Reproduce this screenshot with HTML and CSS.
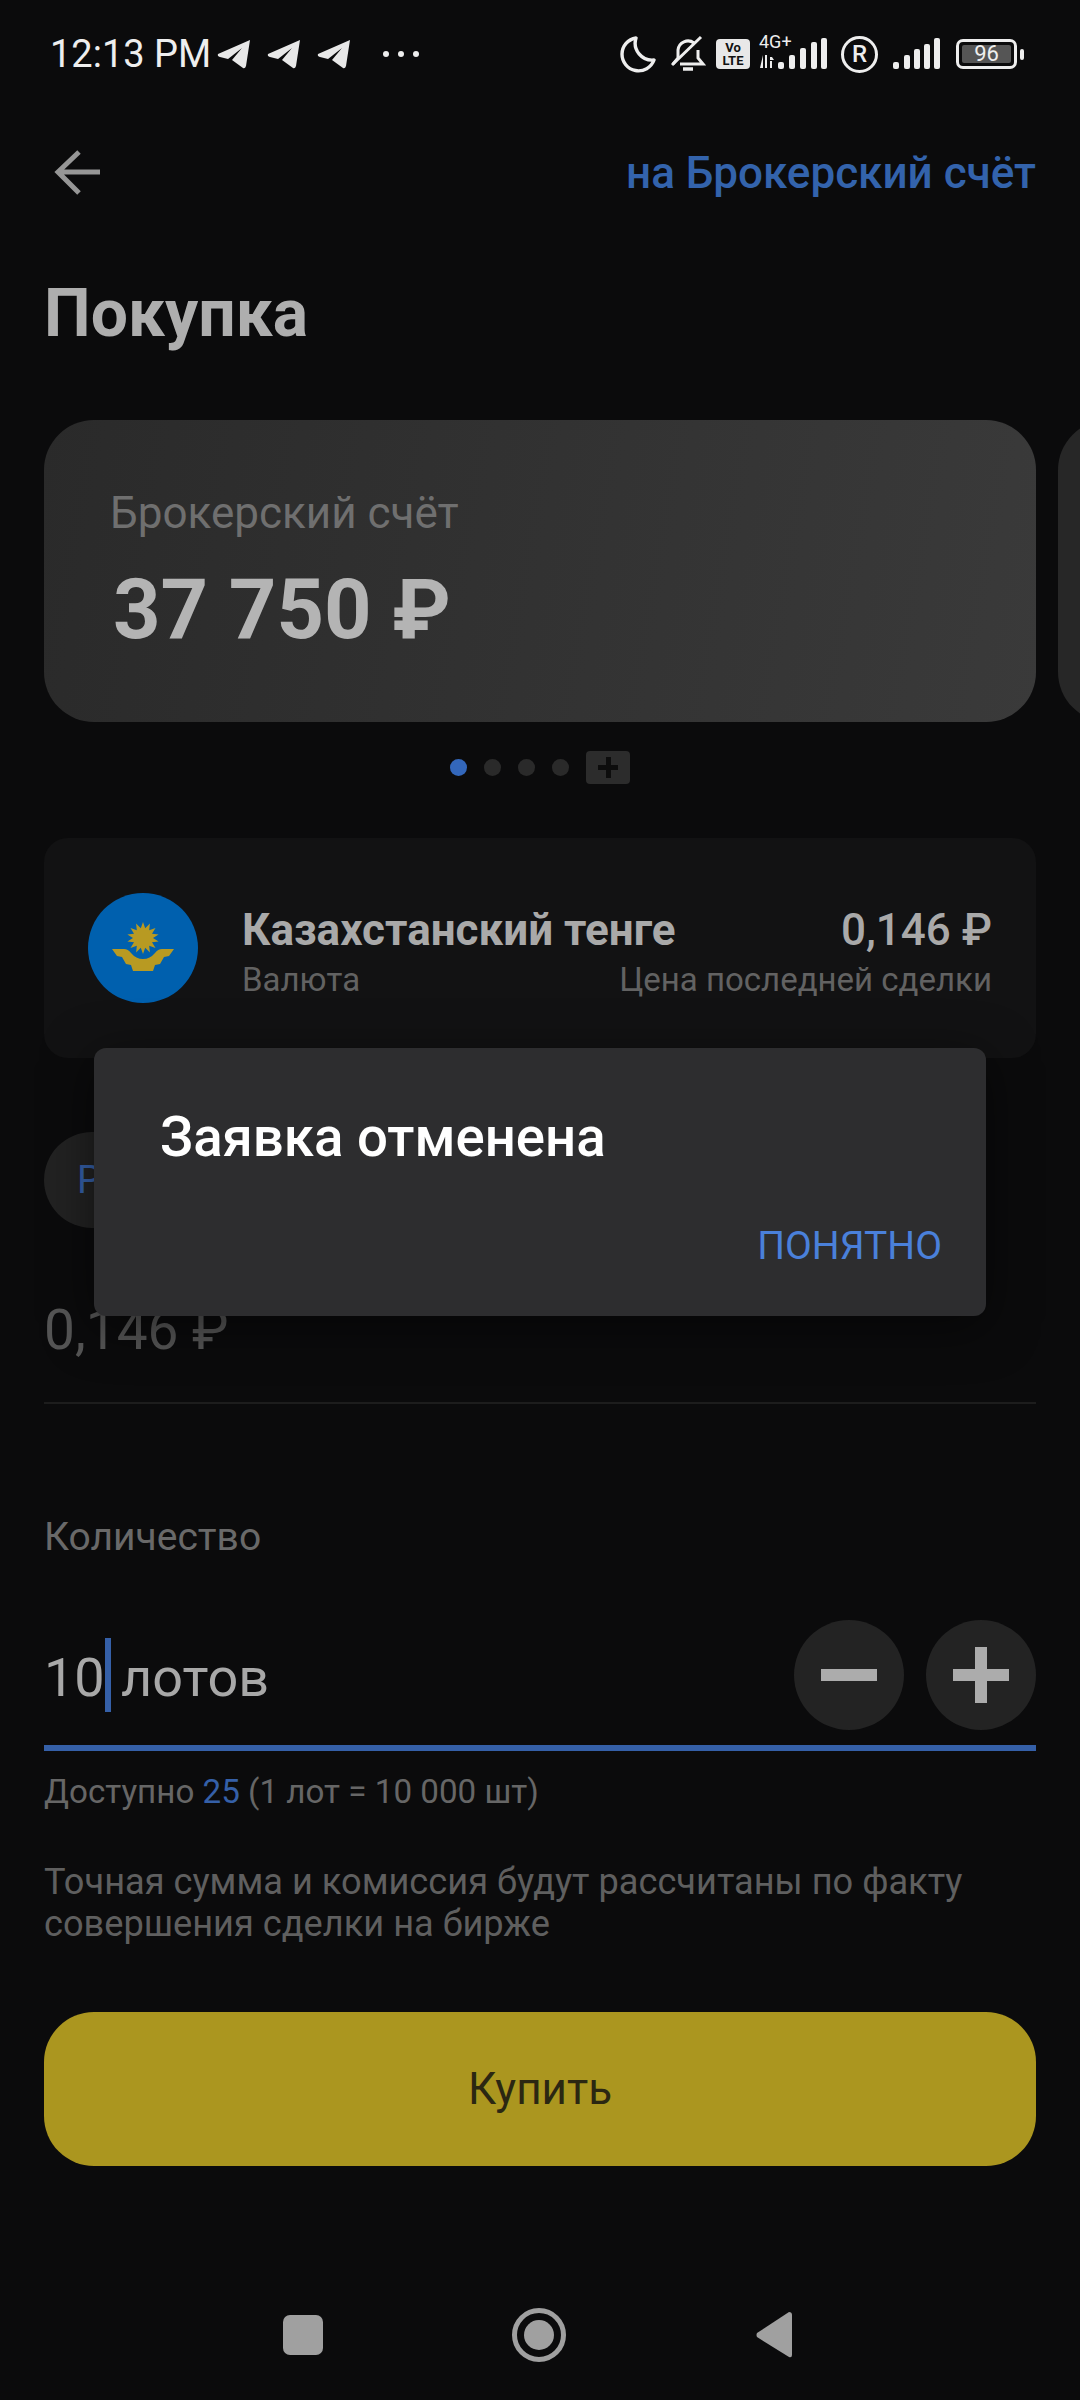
FILE: index.html
```html
<!DOCTYPE html>
<html>
	<head>
		<meta charset="utf-8">
		<title>Покупка</title>
		<link rel="stylesheet" href="styles.css">
	</head>
	<body>
		<div class="screen">
			<div class="status">
				<span class="time">12:13 PM</span>
				<svg class="tg" width="34" height="30" viewBox="0 0 34 30"><path d="M33 1 L1 15 Q0 17 3 18 L11 20 L25 9 L15 21 L26 29 Q28 30 29 27 Z"/></svg>
				<svg class="tg" width="34" height="30" viewBox="0 0 34 30"><path d="M33 1 L1 15 Q0 17 3 18 L11 20 L25 9 L15 21 L26 29 Q28 30 29 27 Z"/></svg>
				<svg class="tg" width="34" height="30" viewBox="0 0 34 30"><path d="M33 1 L1 15 Q0 17 3 18 L11 20 L25 9 L15 21 L26 29 Q28 30 29 27 Z"/></svg>
				<span class="more"><i></i><i></i><i></i></span>
				<div class="status-right">
					<svg width="36" height="38" viewBox="0 0 36 38" fill="none" stroke="#eee" stroke-width="3.4"><path d="M16 3 A16.5 16.5 0 1 0 34 25 A17 17 0 0 1 16 3 Z" stroke-linejoin="round"/></svg>
					<svg class="ic-bell" width="36" height="38" viewBox="0 0 36 38" fill="none" stroke="#eee" stroke-width="3"><path d="M3 29 L8 23 V15 A10 10 0 0 1 24 8 M28 15 V23 L33 29 H10"/><path d="M2 30 L31 2"/><path d="M13 34 H23" stroke-width="3.5"/></svg>
					<span class="volte"><b>Vo</b><b>LTE</b></span>
					<div class="net">
						<span class="net-label">4G+</span>
						<svg width="68" height="32" viewBox="0 0 68 32" fill="#eee">
							<path d="M4 17 V30 H1 Z M6 17 H8 V30 H6 Z M11 19 H13 L15 22 H11 Z M11 23 H13 V30 H11 Z"/>
							<rect x="19" y="24" width="6" height="7" rx="2"/><rect x="30" y="17" width="6" height="14" rx="2"/><rect x="41" y="10" width="6" height="21" rx="2"/><rect x="52" y="4" width="6" height="27" rx="2"/><rect x="62" y="0" width="6" height="31" rx="2"/>
						</svg>
					</div>
					<span class="reg">R</span>
					<svg class="signal" width="48" height="32" viewBox="0 0 48 32" fill="#eee">
						<rect x="0" y="24" width="6" height="7" rx="2"/><rect x="11" y="17" width="6" height="14" rx="2"/><rect x="21" y="11" width="6" height="20" rx="2"/><rect x="31" y="6" width="6" height="25" rx="2"/><rect x="41" y="0" width="6" height="31" rx="2"/>
					</svg>
					<div class="battery">
						<div class="battery-body"><span>96</span></div>
						<i class="battery-nub"></i>
					</div>
				</div>
			</div>

			<div class="topbar">
				<svg width="46" height="46" viewBox="0 0 46 46" fill="none" stroke="#969696" stroke-width="5"><path d="M46 22 H4 M25 2 L4 22 L25 43"/></svg>
				<span class="top-link">на Брокерский счёт</span>
			</div>

			<h1 class="title">Покупка</h1>

			<div class="carousel">
				<div class="account">
					<div class="account-name">Брокерский счёт</div>
					<div class="account-sum">37 750 ₽</div>
				</div>
				<div class="account account-next"></div>
			</div>

			<div class="dots">
				<i class="dot dot-on"></i><i class="dot"></i><i class="dot"></i><i class="dot"></i>
				<span class="dot-plus"></span>
			</div>

			<div class="asset">
				<svg class="flag" width="110" height="110" viewBox="0 0 110 110">
					<circle cx="55" cy="55" r="55" fill="#0060ae"/>
					<polygon fill="#b89a22" points="55,29 57.2,35.2 61.9,30.6 61.2,37.2 67.5,35 64,40.7 70.6,41.4 65,45 70.6,48.6 64,49.3 67.5,55 61.2,52.8 61.9,59.4 57.2,54.75 55,61 52.8,54.75 48.1,59.4 48.8,52.8 42.5,55 46,49.3 39.4,48.6 45,45 39.4,41.4 46,40.7 42.5,35 48.8,37.2 48.1,30.6 52.8,35.2"/>
					<path fill="#b89a22" d="M24 56 H36 Q40 56 43 60 Q48 66 55 66 Q62 66 67 60 Q70 56 74 56 H86 L81 63 L76 64 L72 71 L67 72 L65 78 H45 L43 72 L38 71 L34 64 L29 63 Z"/>
				</svg>
				<div class="asset-col asset-left">
					<div class="asset-name">Казахстанский тенге</div>
					<div class="asset-sub">Валюта</div>
				</div>
				<div class="asset-col asset-right">
					<div class="asset-price">0,146 ₽</div>
					<div class="asset-sub">Цена последней сделки</div>
				</div>
			</div>

			<div class="pill">Р</div>
			<div class="price">0,146 ₽</div>

			<div class="qty-label">Количество</div>
			<div class="qty">
				<div class="qty-value">10<i class="caret"></i> лотов</div>
				<span class="round">
					<svg width="56" height="12" viewBox="0 0 56 12"><rect width="56" height="12" fill="#acacac"/></svg>
				</span>
				<span class="round">
					<svg width="56" height="56" viewBox="0 0 56 56" fill="#acacac"><rect y="22" width="56" height="12"/><rect x="22" width="12" height="56"/></svg>
				</span>
			</div>
			<div class="hint">Доступно <span class="blue">25</span> (1 лот = 10 000 шт)</div>
			<div class="note">Точная сумма и комиссия будут рассчитаны по факту совершения сделки на бирже</div>

			<div class="buy">Купить</div>

			<div class="nav">
				<span class="nav-square"></span>
				<span class="nav-home"><i></i></span>
				<svg width="36" height="46" viewBox="0 0 36 46" fill="#a0a0a0"><path d="M33 0 Q36 0 36 3 V43 Q36 46 33 45 L1 25 Q0 23 1 21 Z"/></svg>
			</div>

			<div class="dialog">
				<div class="dialog-title">Заявка отменена</div>
				<div class="dialog-btn">ПОНЯТНО</div>
			</div>
		</div>
	</body>
</html>
```

FILE: styles.css
```css
*{
	margin: 0;
	padding: 0;
	box-sizing: border-box;
	font-family: Roboto, "Noto Sans", sans-serif;
}
html,body{
	background: #0b0b0c;
}
i{
	display: block;
}
.screen{
	position: relative;
	width: 1080px;
	height: 2400px;
	overflow: hidden;
	background: #0b0b0c;
}

/* status bar */
.status{
	height: 108px;
	padding: 0 56px 0 50px;
	display: flex;
	align-items: center;
	color: #eee;
}
.time{
	font-size: 38px;
	width: 167px;
}
.tg{
	fill: #e8e8e8;
	margin-right: 16px;
}
.more{
	display: flex;
	gap: 9px;
	margin-left: 16px;
}
.more i{
	width: 6px;
	height: 6px;
	border-radius: 50%;
	background: #eee;
}
.status-right{
	margin-left: auto;
	display: flex;
	align-items: center;
}
.ic-bell{
	margin-left: 14px;
}
.volte{
	width: 34px;
	height: 30px;
	margin-left: 10px;
	border-radius: 4px;
	background: #e8e8e8;
	display: flex;
	flex-direction: column;
	align-items: center;
	justify-content: center;
	color: #111;
}
.volte b{
	font-size: 13px;
	line-height: 13px;
	font-weight: 700;
}
.net{
	position: relative;
	width: 68px;
	height: 32px;
	margin-left: 9px;
}
.net-label{
	position: absolute;
	left: 0;
	top: -5px;
	font-size: 18px;
	line-height: 18px;
}
.net svg{
	display: block;
}
.reg{
	width: 37px;
	height: 37px;
	margin-left: 14px;
	border: 3px solid #eee;
	border-radius: 50%;
	font-size: 24px;
	font-weight: 500;
	line-height: 31px;
	text-align: center;
}
.signal{
	margin-left: 15px;
}
.battery{
	margin-left: 15px;
	display: flex;
	align-items: center;
}
.battery-body{
	width: 61px;
	height: 30px;
	padding: 3px;
	border: 3px solid #eee;
	border-radius: 7px;
}
.battery-body span{
	display: block;
	height: 100%;
	background: #555;
	border-radius: 2px;
	font-size: 22px;
	line-height: 18px;
	text-align: center;
}
.battery-nub{
	width: 4px;
	height: 11px;
	margin-left: 3px;
	border-radius: 2px;
	background: #eee;
}

/* header */
.topbar{
	height: 132px;
	padding: 0 44px 2px 54px;
	display: flex;
	align-items: center;
	justify-content: space-between;
}
.top-link{
	font-size: 44px;
	font-weight: 500;
	color: #3363ac;
}
.title{
	margin: 38px 0 0 44px;
	font-size: 66px;
	line-height: 72px;
	font-weight: 700;
	color: #aeaeae;
}

/* account cards */
.carousel{
	margin: 70px 0 0 44px;
	display: flex;
	gap: 22px;
}
.account{
	flex: none;
	width: 992px;
	height: 302px;
	padding: 68px 0 0 66px;
	border-radius: 50px;
	background: linear-gradient(100deg, #2a2a2a, #3a3a3a);
}
.account-next{
	background: #272727;
}
.account-name{
	font-size: 44px;
	line-height: 50px;
	color: #6f6f6f;
}
.account-sum{
	margin: 23px 0 0 3px;
	font-size: 83px;
	line-height: 98px;
	font-weight: 700;
	color: #b4b4b4;
}
.dots{
	margin: 29px 0 0 450px;
	height: 33px;
	display: flex;
	align-items: center;
	gap: 17px;
}
.dot{
	width: 17px;
	height: 17px;
	border-radius: 50%;
	background: #2a2a2a;
}
.dot-on{
	background: #3367bb;
}
.dot-plus{
	position: relative;
	width: 44px;
	height: 33px;
	border-radius: 4px;
	background: #2c2c2c;
}
.dot-plus::before,.dot-plus::after{
	content: "";
	position: absolute;
	background: #0d0d0d;
}
.dot-plus::before{
	left: 12px;
	top: 14px;
	width: 20px;
	height: 5px;
}
.dot-plus::after{
	left: 20px;
	top: 6px;
	width: 5px;
	height: 21px;
}

/* instrument */
.asset{
	margin: 54px 44px 0;
	height: 220px;
	padding: 0 44px;
	display: flex;
	align-items: center;
	border-radius: 24px;
	background: #121213;
}
.flag{
	flex: none;
}
.asset-col{
	padding-top: 10px;
	white-space: nowrap;
}
.asset-left{
	flex: 1;
	min-width: 0;
	margin-left: 44px;
}
.asset-right{
	flex: none;
	text-align: right;
}
.asset-name{
	font-size: 44px;
	line-height: 52px;
	font-weight: 700;
	color: #a9a9a9;
}
.asset-price{
	font-size: 44px;
	line-height: 52px;
	font-weight: 500;
	color: #a9a9a9;
}
.asset-sub{
	margin-top: 2px;
	font-size: 33px;
	line-height: 44px;
	color: #626262;
}

/* form */
.pill{
	margin: 74px 0 0 44px;
	width: 50px;
	height: 96px;
	padding-left: 33px;
	border-radius: 48px 0 0 48px;
	background: #222;
	font-size: 38px;
	line-height: 96px;
	color: #3560a8;
}
.price{
	margin: 72px 44px 0;
	padding-bottom: 42px;
	border-bottom: 2px solid #1d1d1d;
	font-size: 55px;
	line-height: 60px;
	color: #555;
}
.qty-label{
	margin: 111px 0 0 44px;
	font-size: 39px;
	line-height: 44px;
	color: #696969;
}
.qty{
	margin: 61px 44px 0;
	padding-bottom: 15px;
	border-bottom: 6px solid #3560a8;
	display: flex;
	align-items: center;
	gap: 22px;
}
.qty-value{
	flex: 1;
	height: 110px;
	font-size: 54px;
	line-height: 116px;
	color: #a8a8a8;
}
.caret{
	display: inline-block;
	width: 6px;
	height: 74px;
	margin: 0 -3px 0 0;
	vertical-align: -16px;
	background: #3560a8;
}
.round{
	flex: none;
	width: 110px;
	height: 110px;
	border-radius: 50%;
	background: #232323;
	display: flex;
	align-items: center;
	justify-content: center;
}
.hint{
	margin: 21px 0 0 44px;
	font-size: 33.2px;
	line-height: 40px;
	color: #666;
}
.blue{
	color: #3560a8;
}
.note{
	margin: 49px 44px 0;
	font-size: 36.2px;
	line-height: 42px;
	color: #5f5f5f;
}
.buy{
	margin: 67px 44px 0;
	height: 154px;
	border-radius: 50px;
	background: #ab961f;
	font-size: 44px;
	line-height: 154px;
	text-align: center;
	color: #2b2712;
}

/* navigation */
.nav{
	position: relative;
	margin-top: 134px;
	height: 70px;
	padding-left: 283px;
	display: flex;
	align-items: center;
}
.nav-square{
	width: 40px;
	height: 40px;
	border-radius: 7px;
	background: #a0a0a0;
}
.nav-home{
	width: 54px;
	height: 54px;
	margin: 0 190px 0 189px;
	border: 5px solid #a0a0a0;
	border-radius: 50%;
	display: flex;
	align-items: center;
	justify-content: center;
}
.nav-home i{
	width: 30px;
	height: 30px;
	border-radius: 50%;
	background: #a0a0a0;
}

/* dialog */
.dialog{
	position: absolute;
	left: 94px;
	top: 1048px;
	width: 892px;
	height: 268px;
	border-radius: 12px;
	background: #2d2d2f;
	box-shadow: 0 10px 50px rgba(0,0,0,.5);
}
.dialog-title{
	padding: 56px 0 0 66px;
	font-size: 54.6px;
	line-height: 66px;
	font-weight: 500;
	color: #fff;
}
.dialog-btn{
	margin: 53px 44px 0 0;
	font-size: 39px;
	line-height: 46px;
	text-align: right;
	color: #4a80da;
}
```
